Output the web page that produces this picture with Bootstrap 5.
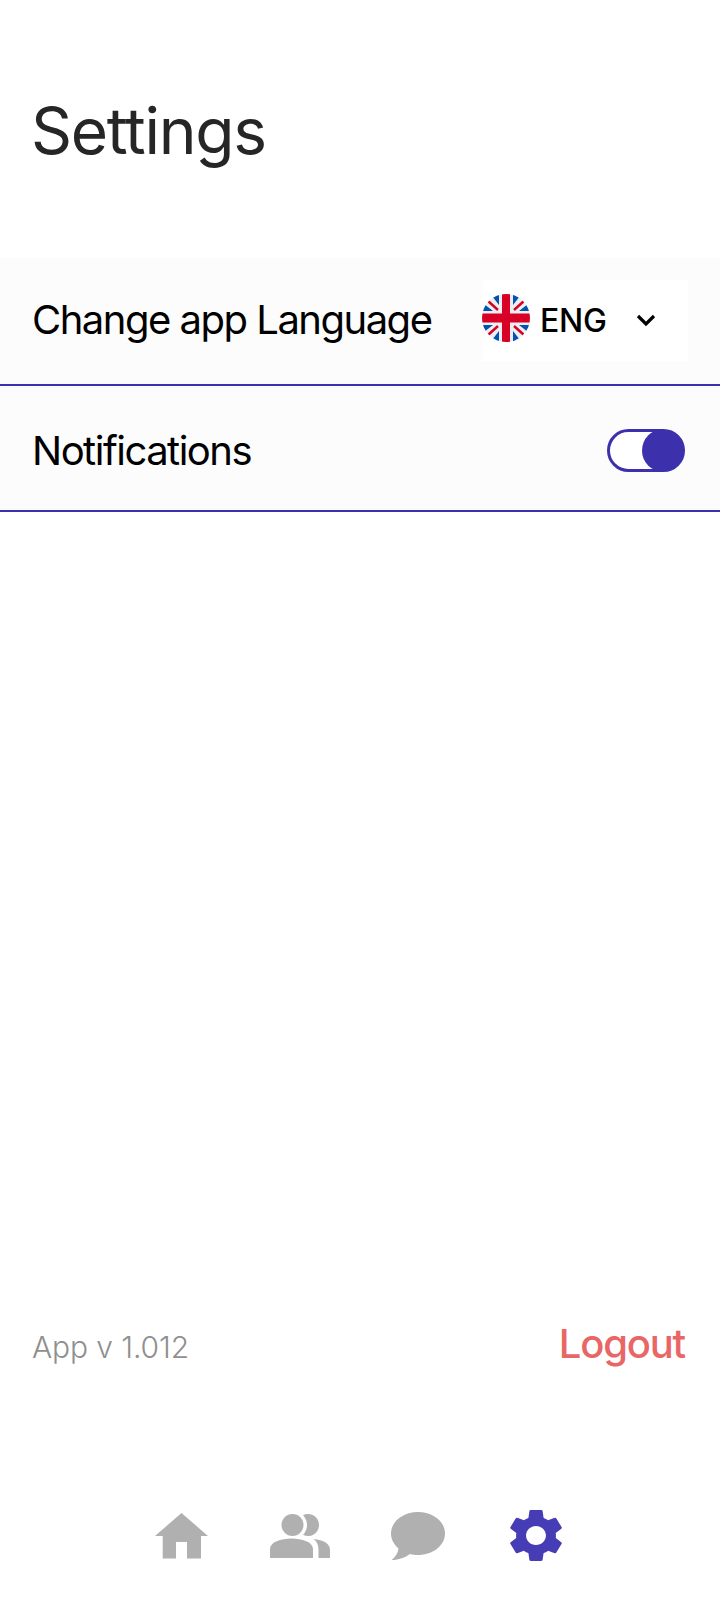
<!DOCTYPE html>
<html lang="en">

<head>
    <meta charset="UTF-8">
    <meta name="viewport" content="width=device-width, initial-scale=1.0">
    <title>Settings</title>
    <link href="https://cdn.jsdelivr.net/npm/bootstrap@5.3.0/dist/css/bootstrap.min.css" rel="stylesheet">
    <style>
        body {
            font-family: Inter, "Liberation Sans", sans-serif;
            background: #fff;
        }
        .screen {
            min-height: 1600px;
        }
        .page-title {
            font-size: 64px;
            font-weight: 400;
            line-height: 78px;
            letter-spacing: -1.3px;
            color: #262626;
            margin: 0;
            padding: 92px 31px 88px;
        }
        .setting-row {
            background: #fcfcfc;
            border-bottom: 2px solid #3d30ad;
            padding-left: 32px;
            padding-right: 35px;
        }
        .row-lang {
            height: 128px;
            padding-right: 32px;
        }
        .row-notify {
            height: 126px;
        }
        .setting-label {
            font-size: 40px;
            line-height: 46px;
            letter-spacing: -1.5px;
            color: #000;
        }
        .row-lang .setting-label {
            margin-bottom: 2px;
        }
        .row-notify .setting-label {
            margin-top: 6px;
        }
        .lang-picker {
            width: 206px;
            height: 81px;
            margin-bottom: 2px;
            background: #fff;
            color: #000;
            font-size: 32px;
            font-weight: 500;
            letter-spacing: -0.3px;
        }
        .lang-picker svg.flag {
            width: 48px;
            height: 48px;
            margin-right: 10px;
            margin-bottom: 5px;
        }
        .lang-name {
            padding-top: 2px;
        }
        .lang-picker svg.chev {
            width: 20px;
            height: 13px;
            margin-left: 29px;
        }
        .form-switch .notify-toggle {
            width: 78px;
            height: 43px;
            margin: 4px 0 0;
            float: none;
            border: 3px solid #3d30ad;
            border-radius: 22px;
            background-color: #fff;
            background-image: url("data:image/svg+xml,%3csvg xmlns='http://www.w3.org/2000/svg' viewBox='0 0 8 8'%3e%3ccircle cx='4' cy='4' r='4' fill='%233d30ad'/%3e%3c/svg%3e");
            background-origin: border-box;
            background-clip: border-box;
            background-position: right center;
            background-size: 43px 43px;
            box-shadow: none;
        }
        .bottom-info {
            padding: 0 35px 0 32px;
            margin-bottom: 134px;
        }
        .app-version {
            font-size: 30px;
            font-weight: 300;
            letter-spacing: -0.1px;
            color: #8f8f8f;
        }
        .logout-link {
            font-size: 40px;
            font-weight: 500;
            line-height: 48px;
            letter-spacing: -1.2px;
            margin-bottom: 7px;
            color: #e96666;
            text-decoration: none;
        }
        .tabbar {
            padding-bottom: 38px;
            padding-right: 3px;
        }
        .tab-slot {
            width: 118px;
            height: 53px;
        }
        .tab-grey {
            fill: #b0b0b0;
        }
        .tab-active {
            fill: #463cb5;
        }
    </style>
</head>

<body>
    <div class="screen d-flex flex-column">
        <h1 class="page-title">Settings</h1>

        <div class="setting-row row-lang d-flex align-items-center justify-content-between">
            <span class="setting-label">Change app Language</span>
            <div class="lang-picker d-flex align-items-center">
                <svg class="flag" viewBox="0 0 48 48">
                    <defs><clipPath id="flagClip"><circle cx="24" cy="24" r="24"/></clipPath></defs>
                    <g clip-path="url(#flagClip)">
                        <rect width="48" height="48" fill="#eeeeee"/>
                        <path fill="#0052b4" d="M0 17 H11 L2 10Z M48 17 H37 L46 10Z M0 31 H11 L2 38Z M48 31 H37 L46 38Z M17 0 V11 L10 2Z M31 0 V11 L38 2Z M17 48 V37 L10 46Z M31 48 V37 L38 46Z"/>
                        <path stroke="#d80027" stroke-width="2.400" d="M6 7 L16 16 M42 7 L32 16 M6 41 L16 32 M42 41 L32 32"/>
                        <path fill="#d80027" d="M20 0 H28 V19.500 H48 V28.500 H28 V48 H20 V28.500 H0 V19.500 H20Z"/>
                    </g>
                </svg>
                <span class="lang-name">ENG</span>
                <svg class="chev" viewBox="0 0 20 13"><path d="M2 2 L10 10 L18 2" fill="none" stroke="#000" stroke-width="3.2"/></svg>
            </div>
        </div>

        <div class="setting-row row-notify d-flex align-items-center justify-content-between">
            <span class="setting-label">Notifications</span>
            <div class="form-check form-switch m-0 p-0 d-flex">
                <input class="form-check-input notify-toggle" type="checkbox" role="switch" checked aria-label="Notifications">
            </div>
        </div>

        <div class="bottom-info mt-auto d-flex align-items-center justify-content-between">
            <span class="app-version">App v 1.012</span>
            <a class="logout-link" href="#">Logout</a>
        </div>

        <nav class="tabbar d-flex justify-content-center">
            <div class="tab-slot d-flex align-items-center justify-content-center">
                <svg width="53" height="46" viewBox="0 0 53 46"><path class="tab-grey" d="M26.5 0 L53 23 H46 V45.500 H32 V29 H21 V45.500 H7.700 V23 H0Z"/></svg>
            </div>
            <div class="tab-slot d-flex align-items-center justify-content-center">
                <svg width="60" height="44" viewBox="0 0 60 44">
                    <path class="tab-grey" d="M33 1.200 A11 11 0 1 1 33 20.800 A14 14 0 0 0 33 1.200Z"/>
                    <path class="tab-grey" d="M43.500 25 C53 26 60 29 60 36 V44 H48.500 V36 C48.500 31 47 27.500 43.500 25Z"/>
                    <circle class="tab-grey" cx="22.500" cy="11" r="11"/>
                    <path class="tab-grey" d="M0 44 V35 C0 28 11 24.500 21.500 24.500 C32 24.500 43 28 43 35 V44Z"/>
                </svg>
            </div>
            <div class="tab-slot d-flex align-items-center justify-content-center">
                <svg width="54" height="48" viewBox="0 0 54 48"><path class="tab-grey" d="M27 0 C42 0 54 9.500 54 21.500 C54 33.500 42 43 27 43 C24 43 21.500 42.700 19 42 C14 45.500 8 48 0.700 48 C4.500 45 7 41 7.500 36.500 C3 32.500 0 27.300 0 21.500 C0 9.500 12 0 27 0Z"/></svg>
            </div>
            <div class="tab-slot d-flex align-items-center justify-content-center">
                <svg width="52" height="53" viewBox="2.600 2 18.800 20" preserveAspectRatio="none"><path class="tab-active" d="M19.140 12.940c.04-.3.06-.61.06-.94 0-.32-.02-.64-.07-.94l2.030-1.580c.18-.14.23-.41.12-.61l-1.920-3.320c-.12-.22-.37-.29-.59-.22l-2.390.96c-.5-.38-1.030-.7-1.620-.94l-.36-2.540c-.04-.24-.24-.41-.48-.41h-3.840c-.24 0-.43.17-.47.41l-.36 2.540c-.59.24-1.130.57-1.620.94l-2.390-.96c-.22-.08-.47 0-.59.22L2.740 8.870c-.12.21-.08.47.12.61l2.030 1.580c-.05.3-.09.63-.09.94s.02.64.07.94l-2.030 1.580c-.18.14-.23.41-.12.61l1.920 3.320c.12.22.37.29.59.22l2.390-.96c.5.38 1.030.7 1.620.94l.36 2.540c.05.24.24.41.48.41h3.840c.24 0 .44-.17.47-.41l.36-2.540c.59-.24 1.130-.56 1.620-.94l2.390.96c.22.08.47 0 .59-.22l1.920-3.320c.12-.22.07-.47-.12-.61l-2.010-1.580zM12 15.600c-1.980 0-3.600-1.620-3.600-3.600s1.620-3.600 3.600-3.600 3.600 1.620 3.600 3.600-1.620 3.600-3.600 3.600z"/></svg>
            </div>
        </nav>
    </div>

    <script src="https://cdn.jsdelivr.net/npm/bootstrap@5.3.0/dist/js/bootstrap.bundle.min.js"></script>
</body>

</html>
